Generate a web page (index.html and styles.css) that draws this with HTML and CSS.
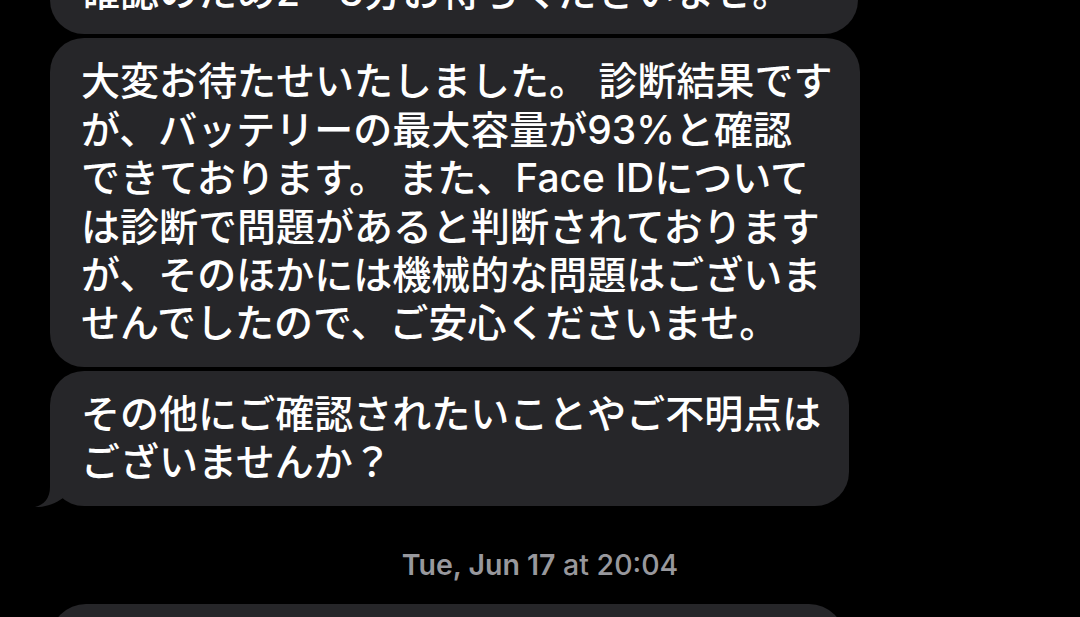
FILE: index.html
```html
<!DOCTYPE html>
<html lang="ja">
<head>
<meta charset="utf-8">
<title>Messages</title>
<link rel="stylesheet" href="styles.css">
</head>
<body>
<main class="thread">
  <div class="group">
    <div class="bubble bubble--wide">確認のため2〜3分お待ちくださいませ。</div>
    <div class="bubble">大変お待たせいたしました。 診断結果です<br>が、バッテリーの最大容量が93%と確認<br>できております。 また、Face IDについて<br>は診断で問題があると判断されております<br>が、そのほかには機械的な問題はございま<br>せんでしたので、ご安心くださいませ。</div>
    <div class="bubble bubble--tail">その他にご確認されたいことやご不明点は<br>ございませんか？<svg class="tail" width="40" height="40" viewBox="0 0 40 40" aria-hidden="true"><path d="M15 0 L15 20 C15 31 9 38 0 40 C9 40.6 20 37 28 31 L40 20 L40 0 Z"/></svg></div>
  </div>
  <div class="stamp"><b>Tue, Jun 17</b> at 20:04</div>
  <div class="group">
    <div class="bubble bubble--next"></div>
  </div>
</main>
</body>
</html>
```

FILE: styles.css
```css
html, body {
  margin: 0;
  padding: 0;
  background: #000;
  height: 100%;
  overflow: hidden;
}

.thread {
  display: flex;
  flex-direction: column;
  margin-top: -51px;
  padding-left: 50px;
}

.group {
  display: flex;
  flex-direction: column;
  align-items: flex-start;
  gap: 4px;
}

.bubble {
  position: relative;
  background: #262629;
  color: #fff;
  border-radius: 34px;
  padding: 19px 28px 19px 31px;
  font-family: "Inter", "Noto Sans CJK JP", sans-serif;
  font-size: 39px;
  font-weight: 500;
  line-height: 48.4px;
  white-space: nowrap;
  box-sizing: border-box;
}

.bubble--wide {
  width: 808px;
  padding-bottom: 18px;
}

.bubble--next {
  width: 795px;
  height: 120px;
  border-radius: 36px;
}

.tail {
  position: absolute;
  left: -15px;
  bottom: -1px;
  fill: #262629;
}

.stamp {
  margin: 42px 0 22px -50px;
  text-align: center;
  color: #98989d;
  font-family: "Inter", "Roboto", sans-serif;
  font-size: 28.5px;
  font-weight: 500;
  line-height: 34px;
}

.stamp b {
  font-weight: 600;
}
```
